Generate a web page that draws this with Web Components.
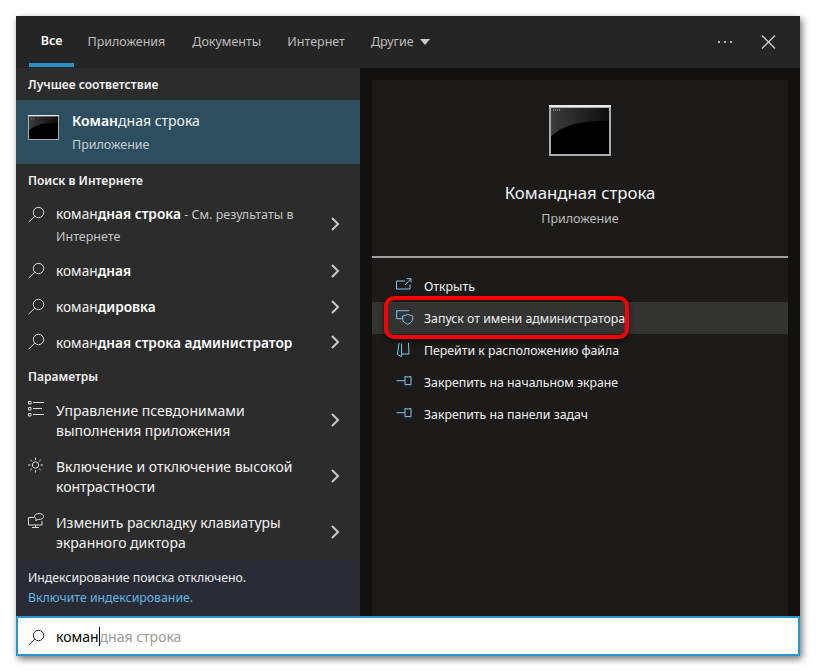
<!DOCTYPE html>
<html>
<head>
<meta charset="utf-8">
<title>Поиск</title>
<style>
html, body { margin: 0; height: 100%; background: #fff; }
body { padding: 16px; box-sizing: border-box; font-family: "Noto Sans", "Open Sans", sans-serif; overflow: hidden; }
result-row b { font-weight: 600; color: #fff; }
result-row small { font-size: 12.5px; color: #c4c4c4; }
</style>
</head>
<body>
<search-window>
  <search-tabs slot="tabs"></search-tabs>
  <results-panel slot="left">
    <section-title>Лучшее соответствие</section-title>
    <best-match></best-match>
    <section-title>Поиск в Интернете</section-title>
    <result-row icon="search" tall>коман<b>дная строка</b><small> - См. результаты в</small><br><small>Интернете</small></result-row>
    <result-row icon="search">коман<b>дная</b></result-row>
    <result-row icon="search">коман<b>дировка</b></result-row>
    <result-row icon="search">коман<b>дная строка администратор</b></result-row>
    <section-title style="margin: -1px 0 1px">Параметры</section-title>
    <result-row icon="list" setting>Управление псевдонимами выполнения приложения</result-row>
    <result-row icon="sun" setting>Включение и отключение высокой контрастности</result-row>
    <result-row icon="screen" setting>Изменить раскладку клавиатуры экранного диктора</result-row>
    <index-note></index-note>
  </results-panel>
  <detail-panel slot="right"></detail-panel>
  <search-box slot="box"></search-box>
</search-window>

<script>
const icons = {
  search: '<circle cx="10.5" cy="6.5" r="5.2"/><path d="M6.8 10.2 .7 16"/>',
  list: '<path d="M.5.5H3V3H.5zM.5 6.500H3V9H.5zM.5 12.500H3V15H.5z"/><path d="M5 1.500h11M5 7.500h9M5 13.500h11"/>',
  sun: '<circle cx="7.5" cy="8" r="3.2"/><path d="M7.500.5V3M7.500 13v2.500M0 8h2.500M12.500 8H15M2.200 2.700 4 4.500M11 11.500l1.800 1.800M2.200 13.300 4 11.500M11 4.500l1.800-1.800"/>',
  screen: '<path d="M6 4.500H.5V12H14V8M7.500 12v2.500M4 14.500h7"/><path d="M11 .5c2.500 0 4.500 1.300 4.500 3s-2 3-4.500 3c-.5 0-1 0-1.500-.2L8 8V5.500C7 5 6.500 4.300 6.500 3.500c0-1.700 2-3 4.500-3z"/>',
  open: '<path d="M9 3H.5v8H14V6.500M10.500.7H15V4.500M15 .7 9 7"/>',
  admin: '<path d="M13 .7H.7v8H6"/><path d="M11.700 4.500l5 1.500v3c0 2.500-2 4-5 5.300-3-1.300-5-2.800-5-5.300V6z"/>',
  folder: '<path d="M3 1 1.500 12.500l4 2 .5-2.500h7L12.500 1M5.500 1.500v10l.5 1"/>',
  pin: '<path d="M.5 6.700H9M9 2.500q3 1.200 6 0V11q-3-1.200-6 0z"/>'
}

function glyph(name) {
  return `<svg width="18" height="18" viewBox="0 0 18 18" fill="none" stroke="currentColor" stroke-width="1">${icons[name]}</svg>`
}

function consoleIcon(w, h, frame) {
  return `<svg width="${w}" height="${h}" viewBox="0 0 ${w} ${h}">
    <defs><linearGradient id="g" x1="0" y1="0" x2="1" y2="0">
      <stop offset="0" stop-color="#3c3c3c"/><stop offset=".7" stop-color="#1c1c1c"/><stop offset="1" stop-color="#0c0c0c"/>
    </linearGradient></defs>
    <rect width="${w}" height="${h}" fill="#a9adb1"/>
    <rect width="${w}" height="${frame}" fill="#e9ebec"/>
    <rect x="${frame}" y="${frame * 1.5}" width="${w - frame * 2}" height="${h - frame * 2.5}" fill="url(#g)"/>
    <path d="M${frame} ${h * .62}C${w * .22} ${h * .4} ${w * .48} ${h * .31} ${w - frame} ${h * .31}V${h - frame}H${frame}z" fill="#000"/>
    <path d="M${frame + 2} ${frame + 3}h${w * .13}" stroke="#999" stroke-width="${frame * .75}" stroke-dasharray="1 1"/>
  </svg>`
}

class SearchWindow extends HTMLElement {
  constructor() {
    super()
    this._shadowRoot = this.attachShadow({ mode: 'open' })
    this._shadowRoot.innerHTML = `
    <style>
    :host {
      display: grid;
      grid-template-columns: 344px 440px;
      grid-template-rows: 52px 548px 40px;
      width: 784px;
      height: 640px;
      box-shadow: 2px 3px 7px rgba(0,0,0,.55);
      background: #121110;
    }
    .wide { grid-column: 1 / 3; }
    </style>
    <div class="wide"><slot name="tabs"></slot></div>
    <div><slot name="left"></slot></div>
    <div><slot name="right"></slot></div>
    <div class="wide"><slot name="box"></slot></div>
    `
  }
}

class SearchTabs extends HTMLElement {
  constructor() {
    super()
    this._shadowRoot = this.attachShadow({ mode: 'open' })
    this._shadowRoot.innerHTML = `
    <style>
    :host {
      display: flex;
      height: 52px;
      background: #252525;
      color: #bdbdbd;
      font-size: 12.5px;
    }
    .tab {
      display: flex;
      align-items: center;
      padding: 0 13.5px 2px;
      box-sizing: border-box;
      height: 52px;
      white-space: nowrap;
    }
    .tab.first { margin-left: 13px; padding: 4px 12px 2px; width: 45px; justify-content: center; color: #fff; font-weight: 600; border-bottom: 4px solid #2a8fc4; height: 51px; }
    .tab.pull { margin-left: -1px; }
    .arrow { width: 0; height: 0; margin-left: 6px; margin-top: 2px; border: 5px solid transparent; border-top: 6px solid #c8c8c8; border-bottom: 0; }
    .right { margin-left: auto; display: flex; align-items: center; padding-right: 24px; gap: 28px; }
    .dots { display: flex; gap: 4px; }
    .dots i { width: 2px; height: 2px; background: #b4b4b4; }
    </style>
    <div class="tab first">Все</div>
    <div class="tab">Приложения</div>
    <div class="tab">Документы</div>
    <div class="tab pull">Интернет</div>
    <div class="tab pull">Другие<span class="arrow"></span></div>
    <div class="right">
      <div class="dots"><i></i><i></i><i></i></div>
      <svg width="16" height="16" viewBox="0 0 16 16" stroke="#ccc" stroke-width="1.3" fill="none"><path d="M2 1.5l13 13M15 1.5l-13 13"/></svg>
    </div>
    `
  }
}

class ResultsPanel extends HTMLElement {
  constructor() {
    super()
    this._shadowRoot = this.attachShadow({ mode: 'open' })
    this._shadowRoot.innerHTML = `
    <style>
    :host {
      display: flex;
      flex-direction: column;
      height: 548px;
      background: #2c2c2c;
      color: #fff;
    }
    </style>
    <slot></slot>
    `
  }
}

class SectionTitle extends HTMLElement {
  constructor() {
    super()
    this._shadowRoot = this.attachShadow({ mode: 'open' })
    this._shadowRoot.innerHTML = `
    <style>
    :host {
      display: flex;
      align-items: center;
      box-sizing: border-box;
      height: 32px;
      padding: 2px 0 0 12px;
      font-size: 12px;
      font-weight: 600;
      color: #f2f2f2;
    }
    </style>
    <slot></slot>
    `
  }
}

class BestMatch extends HTMLElement {
  constructor() {
    super()
    this._shadowRoot = this.attachShadow({ mode: 'open' })
    this._shadowRoot.innerHTML = `
    <style>
    :host {
      display: flex;
      align-items: center;
      height: 64px;
      background: #2d4e5f;
      padding-left: 12px;
    }
    .ico { display: flex; margin: -9px 13px 0 0; }
    .text { margin-top: 2px; }
    .name { font-size: 14px; line-height: 20px; color: #f2f2f2; }
    .name b { font-weight: 600; color: #fff; }
    .sub { font-size: 12.5px; line-height: 18px; margin-top: 5px; color: #c5cdd2; }
    </style>
    <div class="ico">${consoleIcon(31, 25, 1)}</div>
    <div class="text">
      <div class="name"><b>Коман</b>дная строка</div>
      <div class="sub">Приложение</div>
    </div>
    `
  }
}

class ResultRow extends HTMLElement {
  constructor() {
    super()
    this._shadowRoot = this.attachShadow({ mode: 'open' })
    const setting = this.hasAttribute('setting')
    const tall = this.hasAttribute('tall')
    const iconTop = setting ? 9 : tall ? 10 : 0
    this._shadowRoot.innerHTML = `
    <style>
    :host {
      display: flex;
      align-items: center;
      height: ${setting ? 56 : tall ? 57 : 36}px;
      padding-left: 12px;
      font-size: ${setting ? 14 : 13.7}px;
      line-height: ${setting ? 20 : 21}px;
      color: #f2f2f2;
    }
    .ico { flex: none; width: 28px; display: flex; align-self: ${setting || tall ? 'flex-start' : 'center'}; margin-top: ${iconTop}px; color: #dcdcdc; }
    .txt { flex: 1; min-width: 0; margin-top: ${setting || tall ? 2 : 0}px; }
    .chev { flex: none; width: 36px; display: flex; justify-content: center; margin: 0 7.5px 0 2px; color: #c8c8c8; }
    </style>
    <div class="ico">${glyph(this.getAttribute('icon'))}</div>
    <div class="txt"><slot></slot></div>
    <div class="chev"><svg width="10" height="14" viewBox="0 0 10 14" fill="none" stroke="currentColor" stroke-width="2"><path d="M2 1l6 6-6 6"/></svg></div>
    `
  }
}

class IndexNote extends HTMLElement {
  constructor() {
    super()
    this._shadowRoot = this.attachShadow({ mode: 'open' })
    this._shadowRoot.innerHTML = `
    <style>
    :host {
      display: block;
      margin-top: auto;
      height: 56px;
      box-sizing: border-box;
      padding: 8px 12px 0;
      background: #292c35;
      font-size: 12.3px;
      line-height: 20px;
      color: #eee;
    }
    .link { color: #62b4e2; }
    </style>
    <div>Индексирование поиска отключено.</div>
    <div class="link">Включите индексирование.</div>
    `
  }
}

class DetailPanel extends HTMLElement {
  constructor() {
    super()
    this._shadowRoot = this.attachShadow({ mode: 'open' })
    this._shadowRoot.innerHTML = `
    <style>
    :host {
      display: block;
      height: 548px;
      padding: 12px 12px 0;
      box-sizing: border-box;
      background: #121110;
    }
    .card { height: 536px; background: #1c1b1a; color: #f2f2f2; }
    .head { display: flex; flex-direction: column; align-items: center; height: 176px; border-bottom: 2px solid #a0a0a0; }
    .ico { display: flex; margin: 25px 1px 0 0; }
    .title { font-size: 16.8px; line-height: 24px; margin-top: 25px; }
    .sub { font-size: 12.5px; line-height: 18px; margin-top: 5px; color: #bcbcbc; }
    .list { padding-top: 12px; }
    </style>
    <div class="card">
      <div class="head">
        <div class="ico">${consoleIcon(62, 51, 2)}</div>
        <div class="title">Командная строка</div>
        <div class="sub">Приложение</div>
      </div>
      <div class="list">
        <action-row icon="open">Открыть</action-row>
        <action-row icon="admin" active>Запуск от имени администратора</action-row>
        <action-row icon="folder">Перейти к расположению файла</action-row>
        <action-row icon="pin">Закрепить на начальном экране</action-row>
        <action-row icon="pin">Закрепить на панели задач</action-row>
      </div>
    </div>
    `
  }
}

class ActionRow extends HTMLElement {
  constructor() {
    super()
    this._shadowRoot = this.attachShadow({ mode: 'open' })
    const active = this.hasAttribute('active')
    this._shadowRoot.innerHTML = `
    <style>
    :host {
      display: flex;
      align-items: center;
      position: relative;
      height: 32px;
      padding-left: 24px;
      font-size: 12.3px;
      color: #f2f2f2;
      ${active ? 'background: #333332;' : ''}
    }
    .ico { flex: none; width: 28px; display: flex; align-self: flex-start; margin-top: 8px; color: #7cc8f0; }
    .mark {
      position: absolute;
      left: 12px;
      top: -6px;
      width: 245px;
      height: 43px;
      box-sizing: border-box;
      border: 4px solid #f60000;
      border-radius: 10px;
      box-shadow: 0 2px 5px rgba(0,0,0,.6);
    }
    </style>
    <div class="ico">${glyph(this.getAttribute('icon'))}</div>
    <slot></slot>
    ${active ? '<div class="mark"></div>' : ''}
    `
  }
}

class SearchBox extends HTMLElement {
  constructor() {
    super()
    this._shadowRoot = this.attachShadow({ mode: 'open' })
    this._shadowRoot.innerHTML = `
    <style>
    :host {
      display: flex;
      align-items: center;
      height: 40px;
      box-sizing: border-box;
      background: #fff;
      border: 2px solid #2696cc;
      padding-left: 10px;
      font-size: 14px;
      color: #000;
    }
    .ico { display: flex; width: 28px; margin-top: 3px; color: #222; }
    .cur { display: inline-block; width: 1px; height: 19px; background: #000; vertical-align: -4px; }
    .hint { color: #9b9b9b; }
    </style>
    <div class="ico">${glyph('search')}</div>
    <div>коман<span class="cur"></span><span class="hint">дная строка</span></div>
    `
  }
}

customElements.define('search-window', SearchWindow)
customElements.define('search-tabs', SearchTabs)
customElements.define('results-panel', ResultsPanel)
customElements.define('section-title', SectionTitle)
customElements.define('best-match', BestMatch)
customElements.define('result-row', ResultRow)
customElements.define('index-note', IndexNote)
customElements.define('detail-panel', DetailPanel)
customElements.define('action-row', ActionRow)
customElements.define('search-box', SearchBox)
</script>
</body>
</html>
